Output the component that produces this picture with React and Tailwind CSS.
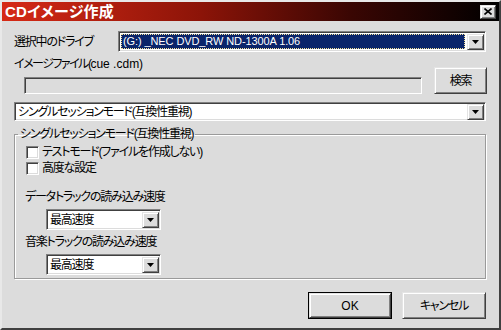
const font = {
  fontFamily: '"Liberation Sans", "Noto Sans CJK JP", sans-serif',
};

const sunken =
  "border border-t-[#808080] border-l-[#808080] border-b-white border-r-white shadow-[inset_1px_1px_0_#404040,inset_-1px_-1px_0_#dcdcdc]";
const raised =
  "border border-t-[#e4e4e4] border-l-[#e4e4e4] border-b-[#404040] border-r-[#404040] shadow-[inset_1px_1px_0_#fff,inset_-1px_-1px_0_#808080]";

function Arrow() {
  return (
    <div className={`w-[17px] h-[16px] flex items-center justify-center bg-[#dcdcdc] ${raised}`}>
      <svg width="7" height="4" viewBox="0 0 7 4">
        <path d="M0 0h7L3.5 4z" fill="#000" />
      </svg>
    </div>
  );
}

function Combo({ value, className }) {
  return (
    <div className={`flex items-center justify-between bg-white pl-[3px] pr-[1px] ${sunken} ${className}`}>
      <span className="text-[12px] leading-[14px] text-black">{value}</span>
      <Arrow />
    </div>
  );
}

function Check({ label }) {
  return (
    <div className="flex items-center h-[16px]">
      <div className={`w-[13px] h-[13px] bg-white ${sunken}`} />
      <span className="ml-[3px] text-[12px] leading-[14px]">{label}</span>
    </div>
  );
}

function Button({ label, def, className }) {
  return (
    <div className={`${def ? "border border-black" : ""} ${className}`}>
      <div className={`w-full h-full flex items-center justify-center bg-[#dcdcdc] text-[12px] ${raised}`}>
        {label}
      </div>
    </div>
  );
}

export default function App() {
  return (
    <div
      style={font}
      className="w-[501px] h-[330px] bg-[#dcdcdc] border-2 border-t-[#e8e8e8] border-l-[#e8e8e8] border-b-[#404040] border-r-[#404040] text-black [font-feature-settings:'palt'] tracking-[-1.2px] overflow-hidden"
    >
      <div className="h-[19px] flex items-center justify-between pl-[3px] pr-[3px] bg-[linear-gradient(90deg,#d62a16_0%,#8c1408_40%,#3a0603_70%,#000_100%)]">
        <span className="text-white font-bold text-[15px] leading-[17px] tracking-[0.2px]">CDイメージ作成</span>
        <div className={`w-[16px] h-[14px] flex items-center justify-center bg-[#dcdcdc] ${raised}`}>
          <svg width="8" height="7" viewBox="0 0 8 7">
            <path d="M0.5 0.5L7.5 6.5M7.5 0.5L0.5 6.5" stroke="#000" strokeWidth="1.6" />
          </svg>
        </div>
      </div>

      <div className="pl-[12px] pr-[13px]">
        <div className="mt-[10px] flex items-center h-[21px]">
          <span className="w-[104px] text-[12px] leading-[14px]">選択中のドライブ</span>
          <div className={`flex-1 h-[21px] flex items-center justify-between bg-white pl-[2px] pr-[1px] ${sunken}`}>
            <div className="h-[15px] w-[344px] bg-[#0a246a] border border-dotted border-[#f4e29a] flex items-center">
              <span className="text-white text-[11px] leading-[13px] pl-[1px] tracking-[-0.1px]">(G:) _NEC DVD_RW ND-1300A 1.06</span>
            </div>
            <Arrow />
          </div>
        </div>

        <div className="flex items-end mt-[5px]">
          <div className="flex-1">
            <div className="text-[12px] leading-[14px]">
              <span className="tracking-[-1.5px]">イメージファイル(</span>
              <span className="tracking-[0px]">cue .cdm)</span>
            </div>
            <div className={`ml-[10px] mt-[6px] w-[398px] h-[17px] bg-[#dcdcdc] ${sunken}`} />
          </div>
          <Button label="検索" className="w-[53px] h-[27px] ml-[12px] mr-[-1px]" />
        </div>

        <Combo value="シングルセッションモード(互換性重視)" className="mt-[8px] h-[19px]" />

        <fieldset className="mt-[6px] h-[152px] border border-[#9a9a9a] shadow-[inset_1px_1px_0_#fff,1px_1px_0_#fff] pl-[11px]">
          <legend className="-ml-[8px] px-[2px] text-[12px] leading-[14px]">シングルセッションモード(互換性重視)</legend>
          <div className="mt-[3px]">
            <Check label="テストモード(ファイルを作成しない)" />
            <Check label="高度な設定" />
          </div>
          <div className="mt-[14px] text-[12px] leading-[14px] -ml-[1px]">データトラックの読み込み速度</div>
          <Combo value="最高速度" className="mt-[5px] ml-[20px] w-[115px] h-[21px]" />
          <div className="mt-[5px] text-[12px] leading-[14px] -ml-[1px]">音楽トラックの読み込み速度</div>
          <Combo value="最高速度" className="mt-[5px] ml-[20px] w-[115px] h-[21px]" />
        </fieldset>

        <div className="mt-[13px] flex justify-end gap-[10px]">
          <Button label="OK" def className="w-[84px] h-[27px] tracking-[0px]" />
          <Button label="キャンセル" className="w-[84px] h-[27px]" />
        </div>
      </div>
    </div>
  );
}
